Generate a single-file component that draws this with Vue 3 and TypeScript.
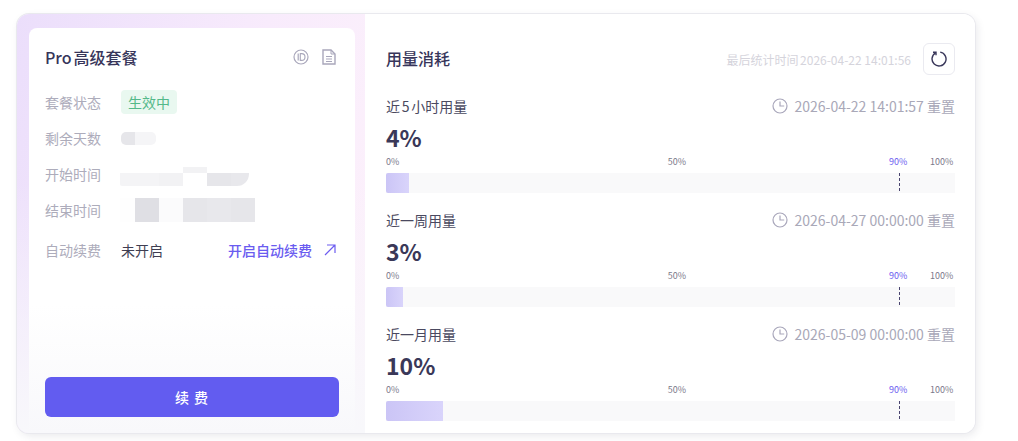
<script setup lang="ts">
interface Usage { label: string; pct: number; reset: string }
const usages: Usage[] = [
  { label: '近5小时用量', pct: 4, reset: '2026-04-22 14:01:57' },
  { label: '近一周用量', pct: 3, reset: '2026-04-27 00:00:00' },
  { label: '近一月用量', pct: 10, reset: '2026-05-09 00:00:00' },
]
const ticks = [
  { text: '0%', left: 0, cls: '' },
  { text: '50%', left: 49.5, cls: '' },
  { text: '90%', left: 88.4, cls: 'accent' },
  { text: '100%', left: 95.6, cls: '' },
]
const days = ['#e6e6ea', '#f5f5f7']
const top = (c: string) => `linear-gradient(#fff 6px, ${c} 6px)`
const start = [top('#f4f4f6'), top('#f4f4f6'), top('#f2f2f4'), 'linear-gradient(#f2f2f4 6px, #fff 6px)', top('#e6e6ea'), top('#e8e8ec')]
const end = ['#fefefe', '#dfdfe4', '#fbfbfc', '#e6e6ea', '#e8e8ec', '#e6e6ea']
</script>

<template>
  <div class="page">
    <section class="card">
      <aside class="left">
        <div class="inner">
          <header class="plan-head">
            <h2 class="plan-title">Pro高级套餐</h2>
            <div class="plan-icons">
              <svg width="16" height="16" viewBox="0 0 16 16" fill="none" stroke="#a9a7bb">
                <circle cx="8" cy="8" r="7" stroke-width="1.2" />
                <path d="M5.2 4.6v6.8" stroke-width="1.2" />
                <path d="M7.3 4.6h1.3a3.4 3.4 0 0 1 0 6.8H7.3z" stroke-width="1.1" />
              </svg>
              <svg width="14" height="16" viewBox="0 0 14 16" fill="none" stroke="#a9a7bb" stroke-width="1.4">
                <path d="M1 1h8l4 4v10H1z" />
                <path d="M9 1v4h4" stroke-width="1" />
                <path d="M4 7.5h6M4 10h6M4 12.5h6" stroke-width="1.1" />
              </svg>
            </div>
          </header>
          <div class="rows">
            <div class="row">
              <span class="key">套餐状态</span>
              <span class="badge">生效中</span>
            </div>
            <div class="row">
              <span class="key">剩余天数</span>
              <span class="mosaic short"><i v-for="(c, i) in days" :key="i" :style="{ background: c }"></i></span>
            </div>
            <div class="row">
              <span class="key">开始时间</span>
              <span class="mosaic start"><i v-for="(c, i) in start" :key="i" :style="{ background: c }"></i></span>
            </div>
            <div class="row">
              <span class="key">结束时间</span>
              <span class="mosaic end"><i v-for="(c, i) in end" :key="i" :style="{ background: c }"></i></span>
            </div>
            <div class="row auto">
              <span class="key">自动续费</span>
              <span class="val">未开启</span>
              <a class="link">
                开启自动续费
                <svg width="12" height="12" viewBox="0 0 12 12" fill="none" stroke="#6c5cf0" stroke-width="1.2">
                  <path d="M1 11L11 1M3 1h8v8" />
                </svg>
              </a>
            </div>
          </div>
          <button class="renew">续 费</button>
        </div>
      </aside>
      <main class="right">
        <header class="usage-head">
          <h2 class="usage-title">用量消耗</h2>
          <span class="stat-time">最后统计时间2026-04-22 14:01:56</span>
          <button class="refresh" aria-label="刷新">
            <svg width="16" height="16" viewBox="0 0 16 16" fill="none" stroke="#39375a" stroke-width="1.4">
              <path d="M4.6 1.9A7 7 0 1 0 9.2 1.1" />
              <path d="M2 1.2h3v3" />
            </svg>
          </button>
        </header>
        <div v-for="u in usages" :key="u.label" class="usage">
          <div class="usage-row">
            <span class="usage-label">{{ u.label }}</span>
            <span class="reset">
              <svg width="16" height="16" viewBox="0 0 16 16" fill="none" stroke="#a9a7bb" stroke-width="1.2">
                <circle cx="8" cy="8" r="7" />
                <path d="M8 3.6V8h4.2" />
              </svg>
              <span class="reset-text">{{ u.reset }} 重置</span>
            </span>
          </div>
          <div class="pct">{{ u.pct }}%</div>
          <div class="ticks">
            <span v-for="t in ticks" :key="t.text" class="tick" :class="t.cls" :style="{ left: t.left + '%' }">{{ t.text }}</span>
          </div>
          <div class="bar">
            <div class="fill" :style="{ width: u.pct + '%' }"></div>
            <div class="mark"></div>
          </div>
        </div>
      </main>
    </section>
  </div>
</template>

<style scoped>
.page {
  width: 1018px;
  height: 441px;
  padding: 14px 43px 0 17px;
  box-sizing: border-box;
  background: #fff;
  overflow: hidden;
  font-family: "Noto Sans CJK SC", "Noto Sans", sans-serif;
  text-autospace: normal;
}
.card {
  display: flex;
  height: 419px;
  border-radius: 12px;
  background: #fff;
  overflow: hidden;
  box-shadow: 0 0 0 1px #e9e9ee, 2px 3px 8px rgba(40, 40, 70, 0.1);
}
.left {
  width: 348px;
  box-sizing: border-box;
  padding: 14px 10px 0 12px;
  background:
    linear-gradient(180deg, rgba(248, 248, 251, 0) 0%, rgba(248, 248, 251, 0) 40%, #f8f8fb 100%),
    linear-gradient(105deg, #ebdefb 0%, #f8ebfc 55%, #fdf2fb 100%);
}
.inner {
  display: flex;
  flex-direction: column;
  height: 100%;
  box-sizing: border-box;
  padding: 0 16px 16px;
  border-radius: 8px 8px 0 0;
  background: linear-gradient(180deg, #fff 0%, #fff 68%, #f8f8fb 100%);
}
.plan-head {
  display: flex;
  align-items: center;
  justify-content: space-between;
  height: 58px;
  margin-bottom: -2px;
}
.plan-title {
  margin: 0;
  font-size: 16px;
  font-weight: 500;
  color: #37355a;
}
.plan-icons {
  display: flex;
  align-items: center;
  gap: 13px;
  padding-right: 3px;
}
.rows {
  display: flex;
  flex-direction: column;
  flex: 1;
}
.row {
  display: flex;
  align-items: center;
  height: 36px;
  font-size: 14px;
}
.row.auto {
  margin-top: 4px;
}
.key {
  width: 76px;
  color: #adacbb;
}
.badge {
  padding: 0 7px;
  height: 24px;
  line-height: 24px;
  border-radius: 4px;
  background: #e9f8f0;
  color: #53b98a;
}
.val {
  color: #3f3e52;
}
.link {
  margin-left: auto;
  display: flex;
  align-items: center;
  gap: 12px;
  padding-right: 3px;
  color: #6a5cf0;
  font-weight: 500;
}
.mosaic {
  display: flex;
  height: 24px;
  margin-left: -1px;
}
.mosaic i {
  display: block;
  width: 24px;
}
.short {
  height: 13px;
  margin-left: 0;
  border-radius: 5px;
  overflow: hidden;
}
.short i {
  width: 14px;
}
.short i:last-child {
  width: 21px;
}
.start {
  height: 19px;
  margin-top: 5px;
  border-radius: 0 0 12px 2px;
  overflow: hidden;
}
.start i:first-child {
  width: 15px;
}
.start i:last-child {
  width: 18px;
}
.end i:first-child {
  width: 15px;
}
.renew {
  display: block;
  width: 100%;
  height: 40px;
  border: 0;
  border-radius: 6px;
  background: #625cf0;
  color: #fff;
  font: 500 14px "Noto Sans CJK SC", "Noto Sans", sans-serif;
  letter-spacing: 1px;
}
.right {
  flex: 1;
  min-width: 0;
  box-sizing: border-box;
  padding: 29px 20px 0 21px;
  background: #fff;
}
.usage-head {
  display: flex;
  align-items: center;
  height: 32px;
  margin-bottom: 24px;
}
.usage-title {
  margin: -2px 0 0;
  font-size: 16px;
  font-weight: 500;
  color: #37355a;
}
.stat-time {
  margin-left: auto;
  margin-right: 12px;
  font-size: 12px;
  color: #d5d4dc;
}
.refresh {
  display: flex;
  align-items: center;
  justify-content: center;
  width: 32px;
  height: 32px;
  padding: 0;
  background: #fff;
  border: 1px solid #eaeaf0;
  border-radius: 6px;
}
.usage {
  height: 114px;
}
.usage-row {
  display: flex;
  align-items: center;
  justify-content: space-between;
  height: 14px;
}
.usage-label {
  font-size: 14px;
  color: #4a4960;
}
.reset {
  display: flex;
  align-items: center;
  gap: 6px;
  color: #a9a8b8;
  font-size: 14px;
}
.reset-text {
  white-space: nowrap;
}
.pct {
  height: 32px;
  margin-top: 8px;
  line-height: 32px;
  font-size: 23px;
  font-weight: 700;
  color: #3a3858;
}
.ticks {
  position: relative;
  height: 12px;
  margin-top: 3px;
  margin-bottom: 5px;
}
.tick {
  position: absolute;
  top: 0;
  font-size: 9px;
  line-height: 12px;
  color: #7a7889;
}
.tick.accent {
  color: #6a5cf0;
}
.bar {
  position: relative;
  height: 20px;
  background: #f9f9fa;
}
.fill {
  height: 100%;
  border-radius: 2px 0 0 2px;
  background: linear-gradient(90deg, #cbc5f6, #d9d4fb);
}
.mark {
  position: absolute;
  top: 0;
  left: calc(90% + 1px);
  height: 18px;
  border-left: 1px dashed #4a4570;
}
</style>
